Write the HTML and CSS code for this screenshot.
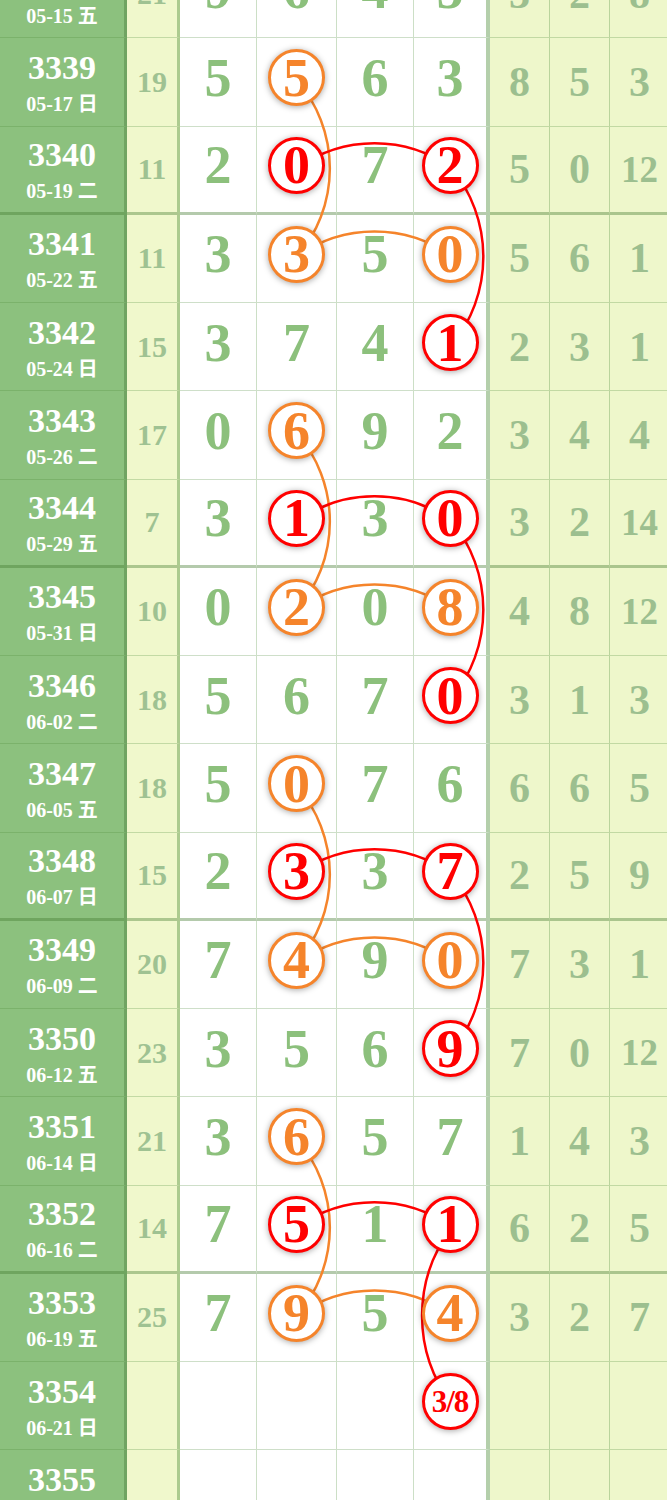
FILE: index.html
```html
<!DOCTYPE html>
<html lang="zh">
<head>
  <meta charset="UTF-8">
  <meta name="viewport" content="width=device-width, initial-scale=1.0">
  <title>走势图</title>
  <link rel="stylesheet" href="styles.css">
</head>
<body>
  <div class="board">
    <!-- connecting arcs, drawn under the balls -->
    <svg class="links" width="670" height="1550" viewBox="0 0 670 1550">
      <g class="line-o">
        <path d="M297 130.25 A135 135 0 0 1 297 306.75"/>
        <path d="M297 306.75 A132 132 0 0 1 452 306.75"/>
        <path d="M297 483.25 A135 135 0 0 1 297 659.75"/>
        <path d="M297 659.75 A132 132 0 0 1 452 659.75"/>
        <path d="M297 836.25 A135 135 0 0 1 297 1012.75"/>
        <path d="M297 1012.75 A132 132 0 0 1 452 1012.75"/>
        <path d="M297 1189.25 A135 135 0 0 1 297 1365.75"/>
        <path d="M297 1365.75 A132 132 0 0 1 452 1365.75"/>
      </g>
      <g class="line-r">
        <path d="M297 218.5 A132 132 0 0 1 452 218.5"/>
        <path d="M452 218.5 A140 140 0 0 1 452 395"/>
        <path d="M297 571.5 A132 132 0 0 1 452 571.5"/>
        <path d="M452 571.5 A140 140 0 0 1 452 748"/>
        <path d="M297 924.5 A132 132 0 0 1 452 924.5"/>
        <path d="M452 924.5 A140 140 0 0 1 452 1101"/>
        <path d="M297 1277.5 A132 132 0 0 1 452 1277.5"/>
        <path d="M452 1277.5 A145 145 0 0 0 452 1454"/>
      </g>
    </svg>

    <div class="row">
      <div class="issue"><b>3338</b><span>05-15 五</span></div>
      <div class="sum">21</div>
      <div class="num">9</div><div class="num">6</div><div class="num">4</div><div class="num last">5</div>
      <div class="gap">3</div><div class="gap">2</div><div class="gap">8</div>
    </div>

    <div class="row">
      <div class="issue"><b>3339</b><span>05-17 日</span></div>
      <div class="sum">19</div>
      <div class="num">5</div><div class="num"><span class="ball o">5</span></div><div class="num">6</div><div class="num last">3</div>
      <div class="gap">8</div><div class="gap">5</div><div class="gap">3</div>
    </div>

    <div class="row sep">
      <div class="issue"><b>3340</b><span>05-19 二</span></div>
      <div class="sum">11</div>
      <div class="num">2</div><div class="num"><span class="ball r">0</span></div><div class="num">7</div><div class="num last"><span class="ball r">2</span></div>
      <div class="gap">5</div><div class="gap">0</div><div class="gap sm">12</div>
    </div>

    <div class="row">
      <div class="issue"><b>3341</b><span>05-22 五</span></div>
      <div class="sum">11</div>
      <div class="num">3</div><div class="num"><span class="ball o">3</span></div><div class="num">5</div><div class="num last"><span class="ball o">0</span></div>
      <div class="gap">5</div><div class="gap">6</div><div class="gap">1</div>
    </div>

    <div class="row">
      <div class="issue"><b>3342</b><span>05-24 日</span></div>
      <div class="sum">15</div>
      <div class="num">3</div><div class="num">7</div><div class="num">4</div><div class="num last"><span class="ball r">1</span></div>
      <div class="gap">2</div><div class="gap">3</div><div class="gap">1</div>
    </div>

    <div class="row">
      <div class="issue"><b>3343</b><span>05-26 二</span></div>
      <div class="sum">17</div>
      <div class="num">0</div><div class="num"><span class="ball o">6</span></div><div class="num">9</div><div class="num last">2</div>
      <div class="gap">3</div><div class="gap">4</div><div class="gap">4</div>
    </div>

    <div class="row sep">
      <div class="issue"><b>3344</b><span>05-29 五</span></div>
      <div class="sum">7</div>
      <div class="num">3</div><div class="num"><span class="ball r">1</span></div><div class="num">3</div><div class="num last"><span class="ball r">0</span></div>
      <div class="gap">3</div><div class="gap">2</div><div class="gap sm">14</div>
    </div>

    <div class="row">
      <div class="issue"><b>3345</b><span>05-31 日</span></div>
      <div class="sum">10</div>
      <div class="num">0</div><div class="num"><span class="ball o">2</span></div><div class="num">0</div><div class="num last"><span class="ball o">8</span></div>
      <div class="gap">4</div><div class="gap">8</div><div class="gap sm">12</div>
    </div>

    <div class="row">
      <div class="issue"><b>3346</b><span>06-02 二</span></div>
      <div class="sum">18</div>
      <div class="num">5</div><div class="num">6</div><div class="num">7</div><div class="num last"><span class="ball r">0</span></div>
      <div class="gap">3</div><div class="gap">1</div><div class="gap">3</div>
    </div>

    <div class="row">
      <div class="issue"><b>3347</b><span>06-05 五</span></div>
      <div class="sum">18</div>
      <div class="num">5</div><div class="num"><span class="ball o">0</span></div><div class="num">7</div><div class="num last">6</div>
      <div class="gap">6</div><div class="gap">6</div><div class="gap">5</div>
    </div>

    <div class="row sep">
      <div class="issue"><b>3348</b><span>06-07 日</span></div>
      <div class="sum">15</div>
      <div class="num">2</div><div class="num"><span class="ball r">3</span></div><div class="num">3</div><div class="num last"><span class="ball r">7</span></div>
      <div class="gap">2</div><div class="gap">5</div><div class="gap">9</div>
    </div>

    <div class="row">
      <div class="issue"><b>3349</b><span>06-09 二</span></div>
      <div class="sum">20</div>
      <div class="num">7</div><div class="num"><span class="ball o">4</span></div><div class="num">9</div><div class="num last"><span class="ball o">0</span></div>
      <div class="gap">7</div><div class="gap">3</div><div class="gap">1</div>
    </div>

    <div class="row">
      <div class="issue"><b>3350</b><span>06-12 五</span></div>
      <div class="sum">23</div>
      <div class="num">3</div><div class="num">5</div><div class="num">6</div><div class="num last"><span class="ball r">9</span></div>
      <div class="gap">7</div><div class="gap">0</div><div class="gap sm">12</div>
    </div>

    <div class="row">
      <div class="issue"><b>3351</b><span>06-14 日</span></div>
      <div class="sum">21</div>
      <div class="num">3</div><div class="num"><span class="ball o">6</span></div><div class="num">5</div><div class="num last">7</div>
      <div class="gap">1</div><div class="gap">4</div><div class="gap">3</div>
    </div>

    <div class="row sep">
      <div class="issue"><b>3352</b><span>06-16 二</span></div>
      <div class="sum">14</div>
      <div class="num">7</div><div class="num"><span class="ball r">5</span></div><div class="num">1</div><div class="num last"><span class="ball r">1</span></div>
      <div class="gap">6</div><div class="gap">2</div><div class="gap">5</div>
    </div>

    <div class="row">
      <div class="issue"><b>3353</b><span>06-19 五</span></div>
      <div class="sum">25</div>
      <div class="num">7</div><div class="num"><span class="ball o">9</span></div><div class="num">5</div><div class="num last"><span class="ball o">4</span></div>
      <div class="gap">3</div><div class="gap">2</div><div class="gap">7</div>
    </div>

    <div class="row">
      <div class="issue"><b>3354</b><span>06-21 日</span></div>
      <div class="sum"></div>
      <div class="num"></div><div class="num"></div><div class="num"></div><div class="num last"><span class="ball r guess">3/8</span></div>
      <div class="gap"></div><div class="gap"></div><div class="gap"></div>
    </div>

    <div class="row">
      <div class="issue"><b>3355</b><span>06-23 二</span></div>
      <div class="sum"></div>
      <div class="num"></div><div class="num"></div><div class="num"></div><div class="num last"></div>
      <div class="gap"></div><div class="gap"></div><div class="gap"></div>
    </div>
  </div>
</body>
</html>
```

FILE: styles.css
```css
html, body {
  margin: 0;
  height: 1500px;
  overflow: hidden;
}

body {
  font-family: "Liberation Serif", "Noto Sans CJK SC", serif;
  font-weight: bold;
  background-color: #fff;
}

.board {
  position: relative;
  width: 670px;
  margin-top: -50px;
}

.row {
  display: grid;
  grid-template-columns: 127px 53px 77px 80px 77px 76px 60px 60px 60px;
  height: 88.25px;
}

.row > div {
  box-sizing: border-box;
  display: flex;
  align-items: center;
  justify-content: center;
  border-bottom: 1.5px solid rgba(80, 140, 60, 0.28);
}

.row.sep > div {
  border-bottom: 3px solid rgba(70, 125, 50, 0.4);
}

/* issue column */
.issue {
  flex-direction: column;
  background-color: #8cc17e;
  color: #fff;
  border-right: 3px solid rgba(50, 100, 35, 0.3);
  padding-top: 2px;
}

.issue b {
  font-size: 34px;
  line-height: 34px;
}

.issue span {
  font-size: 20px;
  line-height: 22px;
  margin-top: 8px;
}

/* sum column */
.sum {
  background-color: #f0f8cc;
  color: #9fc292;
  font-size: 30px;
  border-right: 3px solid rgba(90, 150, 70, 0.45);
}

/* number columns */
.num {
  background-color: #fff;
  color: #8cc07c;
  font-size: 54px;
  line-height: 1;
  border-right: 1.5px solid rgba(90, 150, 70, 0.3);
  padding-bottom: 8px;
}

.num.last {
  border-right: 4px solid rgba(90, 150, 70, 0.45);
}

/* right side stats */
.gap {
  background-color: #eef7cb;
  color: #9cbf8f;
  font-size: 42px;
  border-right: 1.5px solid rgba(90, 150, 70, 0.35);
}

.gap.sm {
  font-size: 37px;
}

/* balls */
.ball {
  position: relative;
  z-index: 2;
  box-sizing: border-box;
  width: 57px;
  height: 57px;
  border-radius: 50%;
  border: 3px solid;
  background-color: #fff;
  display: flex;
  align-items: center;
  justify-content: center;
  font-size: 54px;
  line-height: 1;
  box-shadow: 0 1px 6px rgba(0, 0, 0, 0.35);
}

.ball.o {
  color: #f5842b;
  border-color: #f5842b;
}

.ball.r {
  color: #f00;
  border-color: #f00;
}

.ball.guess {
  font-size: 31px;
  letter-spacing: -1px;
}

/* arcs overlay */
.links {
  position: absolute;
  top: 0;
  left: 0;
  z-index: 1;
  pointer-events: none;
}

.links path {
  fill: none;
  stroke-width: 2.5;
}

.line-o path {
  stroke: #f5842b;
}

.line-r path {
  stroke: #f00;
}
```
